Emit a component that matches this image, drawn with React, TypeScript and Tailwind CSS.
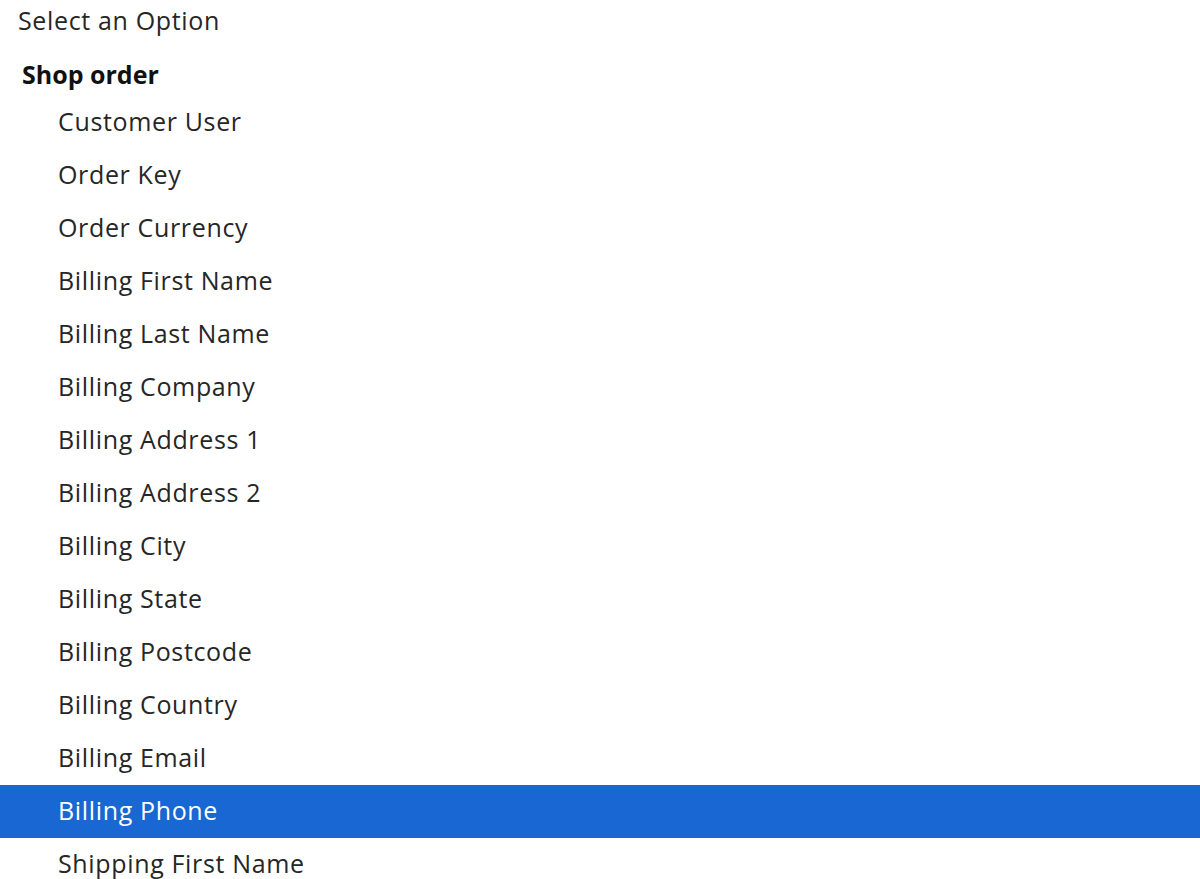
const items = [
  "Customer User",
  "Order Key",
  "Order Currency",
  "Billing First Name",
  "Billing Last Name",
  "Billing Company",
  "Billing Address 1",
  "Billing Address 2",
  "Billing City",
  "Billing State",
  "Billing Postcode",
  "Billing Country",
  "Billing Email",
  "Billing Phone",
  "Shipping First Name",
];

export default function App() {
  return (
    <div className="h-[879px] w-[1200px] overflow-hidden bg-white font-['Open_Sans',sans-serif] text-[25px] tracking-[0.65px] text-[#262626]">
      <div className="flex h-[44px] items-center pb-[2px] pl-[18px]">Select an Option</div>
      <div className="flex h-[52px] items-center pl-[22px] pt-[9px] font-bold tracking-[0px] text-[#111]">
        Shop order
      </div>
      {items.map((label) => {
        const selected = label === "Billing Phone";
        return (
          <div
            key={label}
            className={`flex h-[53px] items-center pb-[2px] pl-[58px] ${
              selected ? "bg-[#1967d2] text-white" : ""
            }`}
          >
            {label}
          </div>
        );
      })}
    </div>
  );
}
